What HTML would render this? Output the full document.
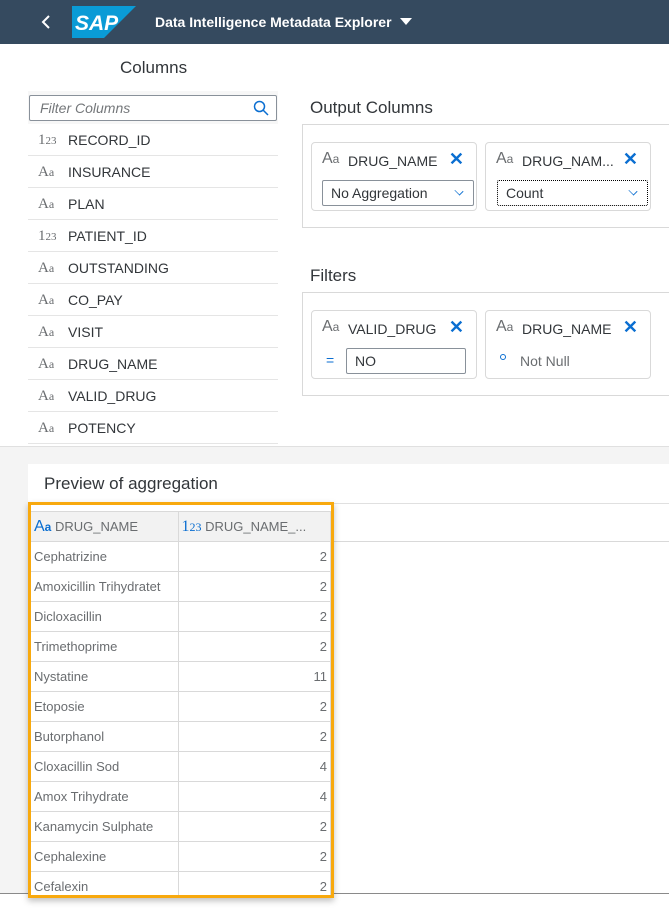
<!DOCTYPE html>
<html><head><meta charset="utf-8"><style>
*{box-sizing:border-box;margin:0;padding:0}
body{width:669px;height:914px;overflow:hidden;font-family:"Liberation Sans",sans-serif;background:#fff;color:#32363a;position:relative;font-size:14px}
.abs{position:absolute}
.hdr{left:0;top:0;width:669px;height:44px;background:#354a5f}
.row{position:absolute;left:28px;width:250px;height:32px;border-bottom:1px solid #e5e5e5;font-size:14px;line-height:32px;color:#32363a}
.row .ic{position:absolute;left:10px;font-family:"Liberation Serif",serif;color:#6a6d70;font-size:15px}
.row .t{position:absolute;left:40px}
.card{position:absolute;border:1px solid #d9d9d9;border-radius:4px;background:#fff;width:166px;height:69px}
.card .ic{position:absolute;left:10px;top:7px;font-family:"Liberation Sans",sans-serif;color:#6a6d70;font-size:16px}
.card .nm{position:absolute;left:36px;top:10px;font-size:14px}
.card .x{position:absolute;right:12px;top:6px;color:#0a6ed1;font-size:18px;font-weight:bold}
.sel{position:absolute;left:10px;top:37px;width:152px;height:26px;border:1px solid #89919a;border-radius:2px;font-size:14px;line-height:24px;padding-left:8px}
.sel .ch{position:absolute;right:10px;top:6px;width:8px;height:8px;border-right:1px solid #0a6ed1;border-bottom:1px solid #0a6ed1;transform:rotate(45deg) scale(.9,.7)}
table{border-collapse:collapse;font-size:13px;color:#6a6d70}
td{height:30px;border:1px solid #d9d9d9;padding:0 3px;white-space:nowrap}
</style></head><body>
<div class="abs hdr"></div>
<svg class="abs" style="left:40px;top:14px" width="12" height="16"><path d="M9 2 L3 8 L9 14" stroke="#fff" stroke-width="2" fill="none"/></svg>
<svg class="abs" style="left:72px;top:6px" width="64" height="32"><polygon points="0,0 64,0 32,32 0,32" fill="#0a9bd6"/><text x="3" y="24" font-family="Liberation Sans" font-weight="bold" font-size="21" fill="#fff" font-style="italic">SAP</text></svg>
<div class="abs" style="left:155px;top:14px;color:#fff;font-weight:bold;font-size:14px">Data Intelligence Metadata Explorer</div>
<svg class="abs" style="left:400px;top:18px" width="12" height="8"><polygon points="0,0 12,0 6,7" fill="#fff"/></svg>

<div class="abs" style="left:120px;top:58px;font-size:17px">Columns</div>
<div class="abs" style="left:28px;top:91px;width:250px;height:33px;background:#f7f7f7"></div>
<div class="abs" style="left:29px;top:95px;width:248px;height:26px;border:1px solid #89919a;border-radius:2px;background:#fff"></div>
<div class="abs" style="left:40px;top:100px;font-style:italic;color:#74777a;font-size:14px">Filter Columns</div>
<svg class="abs" style="left:253px;top:100px" width="16" height="16"><circle cx="6.5" cy="6.5" r="5" stroke="#0a6ed1" stroke-width="1.5" fill="none"/><path d="M10 10 L15 15" stroke="#0a6ed1" stroke-width="1.5"/></svg>

<div class="row" style="top:124px"><span class="ic">1<small style="font-size:11px">23</small></span><span class="t">RECORD_ID</span></div>
<div class="row" style="top:156px"><span class="ic">A<small style="font-size:12px">a</small></span><span class="t">INSURANCE</span></div>
<div class="row" style="top:188px"><span class="ic">A<small style="font-size:12px">a</small></span><span class="t">PLAN</span></div>
<div class="row" style="top:220px"><span class="ic">1<small style="font-size:11px">23</small></span><span class="t">PATIENT_ID</span></div>
<div class="row" style="top:252px"><span class="ic">A<small style="font-size:12px">a</small></span><span class="t">OUTSTANDING</span></div>
<div class="row" style="top:284px"><span class="ic">A<small style="font-size:12px">a</small></span><span class="t">CO_PAY</span></div>
<div class="row" style="top:316px"><span class="ic">A<small style="font-size:12px">a</small></span><span class="t">VISIT</span></div>
<div class="row" style="top:348px"><span class="ic">A<small style="font-size:12px">a</small></span><span class="t">DRUG_NAME</span></div>
<div class="row" style="top:380px"><span class="ic">A<small style="font-size:12px">a</small></span><span class="t">VALID_DRUG</span></div>
<div class="row" style="top:412px"><span class="ic">A<small style="font-size:12px">a</small></span><span class="t">POTENCY</span></div>

<div class="abs" style="left:310px;top:98px;font-size:17px">Output Columns</div>
<div class="abs" style="left:302px;top:124px;width:380px;height:104px;border:1px solid #d9d9d9"></div>
<div class="card" style="left:311px;top:142px"><span class="ic">A<small style="font-size:12px">a</small></span><span class="nm">DRUG_NAME</span><span class="x">✕</span><div class="sel">No Aggregation<span class="ch"></span></div></div>
<div class="card" style="left:485px;top:142px"><span class="ic">A<small style="font-size:12px">a</small></span><span class="nm">DRUG_NAM...</span><span class="x">✕</span><div class="sel" style="border:1px dotted #000;left:11px;width:151px">Count<span class="ch"></span></div></div>

<div class="abs" style="left:310px;top:266px;font-size:17px">Filters</div>
<div class="abs" style="left:302px;top:292px;width:380px;height:104px;border:1px solid #d9d9d9"></div>
<div class="card" style="left:311px;top:310px"><span class="ic">A<small style="font-size:12px">a</small></span><span class="nm">VALID_DRUG</span><span class="x">✕</span><span class="abs" style="left:14px;top:41px;color:#0a6ed1">=</span><div class="sel" style="left:34px;width:120px;padding-left:8px">NO</div></div>
<div class="card" style="left:485px;top:310px"><span class="ic">A<small style="font-size:12px">a</small></span><span class="nm">DRUG_NAME</span><span class="x">✕</span><span class="abs" style="left:14px;top:43px;width:6px;height:6px;border:1px solid #0a6ed1;border-radius:50%"></span><span class="abs" style="left:34px;top:42px;color:#6a6d70">Not Null</span></div>

<div class="abs" style="left:0;top:446px;width:669px;height:448px;background:#f4f4f4;border-top:1px solid #e0e0e0"></div>
<div class="abs" style="left:28px;top:464px;width:641px;height:430px;background:#fff"></div>
<div class="abs" style="left:44px;top:474px;font-size:17px">Preview of aggregation</div>
<div class="abs" style="left:28px;top:503px;width:641px;height:1px;background:#e0e0e0"></div>
<div class="abs" style="left:333px;top:541px;width:336px;height:1px;background:#d9d9d9"></div>
<div class="abs" style="left:0;top:893px;width:669px;height:1px;background:#8a8a8a"></div>
<div class="abs" style="left:28px;top:502px;width:306px;height:396px;border:3px solid #f8a90e;box-shadow:0 3px 6px rgba(0,0,0,.25);overflow:hidden;background:#fff">
<table style="width:300px;margin-top:6px">
<tr style="background:#f2f2f2"><td style="width:147px;border-left:none">
<span style="color:#0a6ed1;font-size:16px">A<small style="font-size:12px;font-weight:bold">a</small></span> DRUG_NAME</td><td><span style="font-family:'Liberation Serif',serif;color:#0a6ed1;font-size:16px">1<small style="font-size:12px">23</small></span> DRUG_NAME_...</td></tr>
<tr><td style="border-left:none">Cephatrizine</td><td align="right">2</td></tr>
<tr><td style="border-left:none">Amoxicillin Trihydratet</td><td align="right">2</td></tr>
<tr><td style="border-left:none">Dicloxacillin</td><td align="right">2</td></tr>
<tr><td style="border-left:none">Trimethoprime</td><td align="right">2</td></tr>
<tr><td style="border-left:none">Nystatine</td><td align="right">11</td></tr>
<tr><td style="border-left:none">Etoposie</td><td align="right">2</td></tr>
<tr><td style="border-left:none">Butorphanol</td><td align="right">2</td></tr>
<tr><td style="border-left:none">Cloxacillin Sod</td><td align="right">4</td></tr>
<tr><td style="border-left:none">Amox Trihydrate</td><td align="right">4</td></tr>
<tr><td style="border-left:none">Kanamycin Sulphate</td><td align="right">2</td></tr>
<tr><td style="border-left:none">Cephalexine</td><td align="right">2</td></tr>
<tr><td style="border-left:none">Cefalexin</td><td align="right">2</td></tr>
</table></div>
</body></html>
